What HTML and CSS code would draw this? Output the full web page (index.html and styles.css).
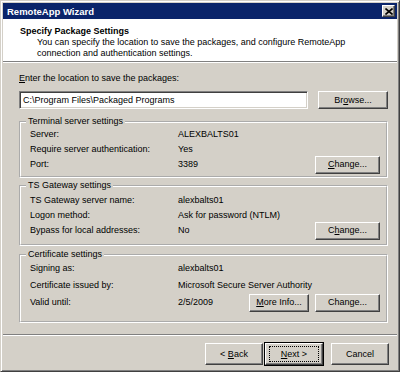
FILE: index.html
```html
<!DOCTYPE html>
<html>
<head>
    <title>RemoteApp Wizard</title>
    <link rel="stylesheet" href="styles.css">
</head>
<body>
    <div class="window">
        <!-- Title bar -->
        <div class="titlebar">
            <span class="title">RemoteApp Wizard</span>
            <button class="close-btn">
                <svg viewBox="0 0 8 7" width="8" height="7">
                    <path d="M0.5 0.5L7.5 6.5M7.5 0.5L0.5 6.5" stroke="#000" stroke-width="1.6"></path>
                </svg>
            </button>
        </div>

        <!-- Page header -->
        <div class="header">
            <div class="header-title">Specify Package Settings</div>
            <div class="header-text">You can specify the location to save the packages, and configure RemoteApp<br>connection and authentication settings.</div>
        </div>

        <!-- Settings -->
        <div class="content">
            <div class="field-label"><u>E</u>nter the location to save the packages:</div>
            <div class="path-row">
                <div class="textbox">C:\Program Files\Packaged Programs</div>
                <button class="btn browse-btn">Br<u>o</u>wse...</button>
            </div>

            <fieldset class="group group-server">
                <legend>Terminal server settings</legend>
                <div class="row"><span class="label">Server:</span><span class="value">ALEXBALTS01</span></div>
                <div class="row"><span class="label">Require server authentication:</span><span class="value">Yes</span></div>
                <div class="row"><span class="label">Port:</span><span class="value">3389</span><button class="btn change-btn"><u>C</u>hange...</button></div>
            </fieldset>

            <fieldset class="group group-gateway">
                <legend>TS Gateway settings</legend>
                <div class="row"><span class="label">TS Gateway server name:</span><span class="value">alexbalts01</span></div>
                <div class="row"><span class="label">Logon method:</span><span class="value">Ask for password (NTLM)</span></div>
                <div class="row"><span class="label">Bypass for local addresses:</span><span class="value">No</span><button class="btn change-btn">C<u>h</u>ange...</button></div>
            </fieldset>

            <fieldset class="group group-cert">
                <legend>Certificate settings</legend>
                <div class="row"><span class="label">Signing as:</span><span class="value">alexbalts01</span></div>
                <div class="row"><span class="label">Certificate issued by:</span><span class="value">Microsoft Secure Server Authority</span></div>
                <div class="row"><span class="label">Valid until:</span><span class="value">2/5/2009</span><button class="btn info-btn"><u>M</u>ore Info...</button><button class="btn change-btn">Change...</button></div>
            </fieldset>
        </div>

        <!-- Wizard buttons -->
        <div class="footer">
            <button class="btn nav-btn">&lt; <u>B</u>ack</button>
            <button class="btn nav-btn default-btn"><span class="focus"><u>N</u>ext &gt;</span></button>
            <button class="btn nav-btn cancel-btn">Cancel</button>
        </div>
    </div>
</body>
</html>
```

FILE: styles.css
```css
body {
    margin: 0;
    font-family: "Liberation Sans", Arial, sans-serif;
    font-size: 9px;
    color: #000;
}

.window {
    width: 400px;
    height: 372px;
    box-sizing: border-box;
    border: 1px solid;
    border-color: #d4d0c8 #404040 #404040 #d4d0c8;
    box-shadow: inset 1px 1px 0 #fff, inset -1px -1px 0 #808080;
    padding: 2px;
    background: #d4d0c8;
    display: flex;
    flex-direction: column;
}

.titlebar {
    height: 16px;
    background: #0a246a;
    display: flex;
    align-items: center;
    justify-content: space-between;
    padding: 0 2px 0 4px;
}

.title {
    color: #fff;
    font-weight: bold;
    font-size: 9.5px;
}

.close-btn {
    width: 13px;
    height: 12px;
    padding: 0;
    display: flex;
    align-items: center;
    justify-content: center;
    background: #d4d0c8;
    border: 1px solid;
    border-color: #fff #404040 #404040 #fff;
    box-shadow: inset -1px -1px 0 #808080;
}

.header {
    height: 43px;
    box-sizing: border-box;
    background: #fff;
    padding: 7px 0 0 17px;
    border-bottom: 1px solid #808080;
    line-height: 11px;
}

.header-title {
    font-weight: bold;
}

.header-text {
    padding-left: 17px;
}

.content {
    flex: 1;
    border-top: 1px solid #fff;
    padding: 10px 9px 0 16px;
    line-height: 11px;
}

.path-row {
    display: flex;
    gap: 10px;
    margin-top: 7px;
}

.textbox {
    flex: 1;
    height: 18px;
    box-sizing: border-box;
    background: #fff;
    border: 1px solid;
    border-color: #808080 #fff #fff #808080;
    box-shadow: inset 1px 1px 0 #404040, inset -1px -1px 0 #d4d0c8;
    padding: 3px 0 0 3px;
    white-space: nowrap;
}

.btn {
    font-family: inherit;
    font-size: 9px;
    color: #000;
    background: #d4d0c8;
    border: 1px solid;
    border-color: #fff #404040 #404040 #fff;
    box-shadow: inset -1px -1px 0 #808080;
    padding: 0;
    height: 18px;
    line-height: 11px;
}

.browse-btn {
    width: 70px;
}

.group {
    margin: 0;
    border: 2px groove #fff;
    padding: 0 6px 4px 9px;
}

.group legend {
    padding: 0 2px;
    margin-left: -4px;
    line-height: 11px;
}

.group-server {
    margin-top: 7px;
}

.group-gateway {
    margin-top: 2px;
    padding-top: 2px;
    padding-bottom: 6px;
}

.group-cert {
    margin-top: 3px;
    padding-bottom: 10px;
}

.row {
    display: flex;
    align-items: center;
    height: 15px;
}

.group-cert .row {
    height: 17px;
}

.label {
    width: 148px;
    flex-shrink: 0;
}

.value {
    flex: 1;
}

.row .btn {
    margin: -2px 0;
}

.change-btn {
    width: 65px;
}

.info-btn {
    width: 60px;
    margin-right: 6px !important;
}

.footer {
    border-top: 1px solid #808080;
    box-shadow: inset 0 1px 0 #fff;
    height: 35px;
    box-sizing: border-box;
    padding: 8px 8px 0 0;
    display: flex;
    justify-content: flex-end;
}

.nav-btn {
    width: 58px;
    height: 22px;
}

.default-btn {
    margin-left: 2px;
    outline: 1px solid #000;
    display: flex;
    align-items: center;
    justify-content: center;
}

.focus {
    display: block;
    width: 48px;
    height: 14px;
    line-height: 14px;
    border: 1px dotted #000;
}

.cancel-btn {
    margin-left: 8px;
}
```
